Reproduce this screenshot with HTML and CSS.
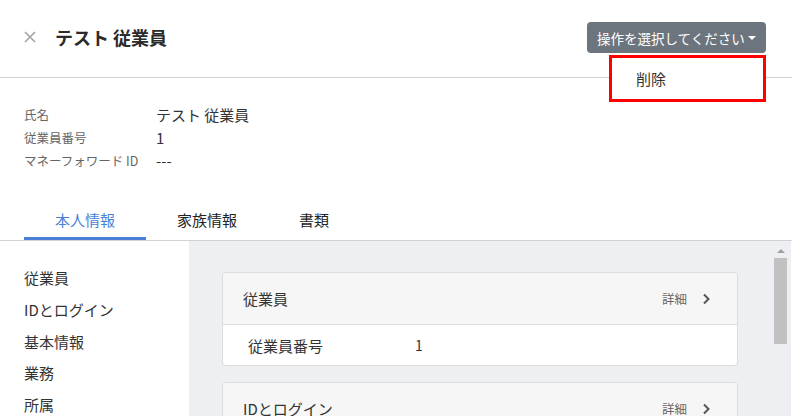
FILE: index.html
```html
<!DOCTYPE html>
<html lang="ja">
<head>
  <meta charset="utf-8">
  <title>テスト 従業員</title>
  <link rel="stylesheet" href="styles.css">
</head>
<body>

  <header class="header">
    <div class="title-wrap">
      <svg class="close" width="12" height="12" viewBox="0 0 12 12">
        <path d="M1 1L11 11M11 1L1 11" stroke="#a3a3a3" stroke-width="1.6" fill="none"/>
      </svg>
      <h1 class="title">テスト 従業員</h1>
    </div>
    <div class="action">
      <button class="action-btn">操作を選択してください<span class="caret"></span></button>
      <div class="menu">
        <div class="menu-item">削除</div>
      </div>
    </div>
  </header>

  <section class="profile">
    <div class="profile-row">
      <span class="profile-label">氏名</span>
      <span class="profile-value">テスト 従業員</span>
    </div>
    <div class="profile-row">
      <span class="profile-label">従業員番号</span>
      <span class="profile-value">1</span>
    </div>
    <div class="profile-row">
      <span class="profile-label">マネーフォワード ID</span>
      <span class="profile-value">---</span>
    </div>
  </section>

  <nav class="tabs">
    <div class="tab active">本人情報</div>
    <div class="tab">家族情報</div>
    <div class="tab">書類</div>
  </nav>

  <div class="body">
    <ul class="side">
      <li>従業員</li>
      <li>IDとログイン</li>
      <li>基本情報</li>
      <li>業務</li>
      <li>所属</li>
    </ul>

    <main class="pane">
      <div class="card">
        <div class="card-head">
          <span class="card-title">従業員</span>
          <span class="card-link">詳細
            <svg width="9" height="12" viewBox="0 0 9 12"><path d="M2 1.5L6.5 6L2 10.5" stroke="#555" stroke-width="2" fill="none"/></svg>
          </span>
        </div>
        <div class="card-row">
          <span class="row-label">従業員番号</span>
          <span class="row-value">1</span>
        </div>
      </div>

      <div class="card">
        <div class="card-head">
          <span class="card-title">IDとログイン</span>
          <span class="card-link">詳細
            <svg width="9" height="12" viewBox="0 0 9 12"><path d="M2 1.5L6.5 6L2 10.5" stroke="#555" stroke-width="2" fill="none"/></svg>
          </span>
        </div>
      </div>
    </main>

    <div class="scrollbar">
      <span class="arrow"></span>
      <span class="thumb"></span>
    </div>
  </div>

</body>
</html>
```

FILE: styles.css
```css
body {
  margin: 0;
  font-family: "Noto Sans CJK JP", "Noto Sans", sans-serif;
  color: #333;
  background: #fff;
  height: 416px;
  overflow: hidden;
}
.header {
  height: 77px;
  border-bottom: 1px solid #d3d3d3;
  display: flex;
  justify-content: space-between;
  align-items: flex-start;
}
.title-wrap {
  display: flex;
  align-items: center;
  padding: 24px 0 0 24px;
}
.close {
  margin-right: 19px;
}
.title {
  margin: 0;
  font-size: 18px;
  font-weight: bold;
  line-height: 26px;
  color: #2b2b2b;
}
.action {
  position: relative;
  margin: 22px 26px 0 0;
}
.action-btn {
  height: 31px;
  width: 179px;
  padding: 0 0 0 10px;
  background: #6c757d;
  color: #fff;
  border: none;
  border-radius: 4px;
  font-family: inherit;
  font-size: 13.5px;
  display: flex;
  align-items: center;
}
.caret {
  display: inline-block;
  margin-left: 3px;
  border-left: 4px solid transparent;
  border-right: 4px solid transparent;
  border-top: 4px solid #fff;
}
.menu {
  position: absolute;
  right: 0;
  top: 33px;
  width: 151px;
  height: 41px;
  background: #fff;
  border: 3px solid #f00;
}
.menu-item {
  padding-left: 24px;
  line-height: 41px;
  font-size: 15px;
  color: #333;
}
.profile {
  padding: 25px 0 0 24px;
  height: 103px;
}
.profile-row {
  display: flex;
  align-items: center;
  height: 23px;
}
.profile-label {
  width: 132px;
  font-size: 12.5px;
  color: #666;
}
.profile-value {
  font-size: 15px;
  color: #333;
}
.tabs {
  display: flex;
  padding-left: 24px;
  border-bottom: 1px solid #d3d3d3;
}
.tab {
  padding: 0 31px;
  font-size: 15px;
  line-height: 28px;
  height: 31px;
  color: #222;
  border-bottom: 3px solid transparent;
}
.tab.active {
  color: #4a7fd8;
  border-bottom-color: #4a7fd8;
}
.body {
  display: flex;
  height: 175px;
}
.side {
  list-style: none;
  margin: 0;
  padding: 21px 0 0 24px;
  width: 165px;
  font-size: 15px;
  line-height: 31.75px;
  color: #333;
}
.pane {
  flex: 1;
  background: #eeeff2;
  padding: 31px 32px 0 33px;
}
.card {
  border: 1px solid #dcdcdc;
  border-radius: 4px;
  background: #fff;
  margin-bottom: 16px;
  overflow: hidden;
}
.card-head {
  height: 51px;
  background: #f6f6f6;
  display: flex;
  align-items: center;
  justify-content: space-between;
  padding: 0 26px 0 20px;
}
.card-title {
  font-size: 15px;
  color: #333;
}
.card-link {
  font-size: 12.5px;
  color: #666;
  display: flex;
  align-items: center;
  gap: 15px;
}
.card-row {
  height: 40px;
  border-top: 1px solid #dcdcdc;
  display: flex;
  align-items: center;
  padding-left: 25px;
}
.row-label {
  width: 167px;
  font-size: 15px;
  color: #333;
}
.row-value {
  font-size: 14px;
  color: #333;
}
.scrollbar {
  width: 21px;
  background: #eeeff2;
  border-right: 1px solid #fff;
  display: flex;
  flex-direction: column;
  align-items: center;
}
.arrow {
  margin-top: 8px;
  border-left: 4px solid transparent;
  border-right: 4px solid transparent;
  border-bottom: 4px solid #a0a0a0;
}
.thumb {
  margin-top: 5px;
  width: 13px;
  height: 86px;
  background: #c1c1c1;
}
```
